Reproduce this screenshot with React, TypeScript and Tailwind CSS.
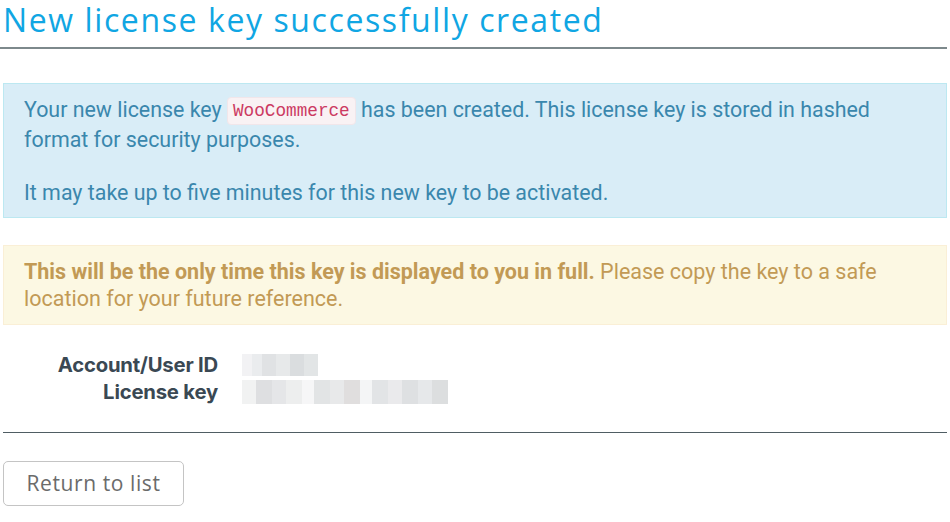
import React from "react";

export default function App() {
  const body = { fontFamily: "Roboto, 'Liberation Sans', sans-serif" };
  const head = { fontFamily: "'Open Sans', 'Liberation Sans', sans-serif" };
  return (
    <div className="w-[950px] h-[522px] bg-white overflow-hidden" style={body}>
      <div className="w-[947px] pl-[3px]">
        <h1
          className="-ml-[3px] pl-[3px] border-b-2 border-[#7d898c] h-[49px] text-[32px] leading-[40px] text-[#10a6e3] tracking-[1.6px] whitespace-nowrap"
          style={head}
        >
          New license key successfully created
        </h1>

        <div className="mt-[34px] h-[135px] bg-[#d9edf7] border border-[#bce8f1] text-[#3a87ad] text-[21.4px] leading-[30px] pl-[20px] pr-[20px] pt-[11px]">
          <p className="mb-[23px]">
            Your new license key{" "}
            <code
              className="inline-block align-[1px] leading-[20px] bg-[#f9f2f4] text-[#cc3a62] text-[17.7px] px-[5px] py-[3px] rounded-[4px] border border-[#f1e6ea]"
              style={{ fontFamily: "'Liberation Mono', monospace" }}
            >
              WooCommerce
            </code>{" "}
            has been created. This license key is stored in hashed format for security purposes.
          </p>
          <p>It may take up to five minutes for this new key to be activated.</p>
        </div>

        <div className="mt-[27px] h-[80px] bg-[#fcf8e3] border border-[#faefd6] text-[#c29a55] text-[21.5px] leading-[27px] pl-[20px] pr-[20px] pt-[12px]">
          <b className="font-bold">This will be the only time this key is displayed to you in full.</b>{" "}
          Please copy the key to a safe location for your future reference.
        </div>

        <div
          className="mt-[26px] grid grid-cols-[215px_1fr] gap-x-[24px] text-[20.3px] leading-[27px]"
          style={{ fontFamily: "Inter, 'Liberation Sans', sans-serif" }}
        >
          <div className="text-right font-bold text-[#3a4853] tracking-[-0.2px]">Account/User ID</div>
          <div className="flex items-center">
            <div className="flex h-[22px] w-[76px] opacity-80">
              <div className="w-[10px] bg-[#f0f0f2]" />
              <div className="w-[10px] bg-[#e6e8ea]" />
              <div className="w-[14px] bg-[#d9dcde]" />
              <div className="w-[14px] bg-[#e2e4e6]" />
              <div className="w-[14px] bg-[#d2d5d8]" />
              <div className="w-[14px] bg-[#dcdfe1]" />
            </div>
          </div>
          <div className="text-right font-bold text-[#3a4853] tracking-[-0.2px]">License key</div>
          <div className="flex items-center">
            <div className="flex h-[24px] w-[210px] opacity-80">
              <div className="w-[14px] bg-[#eeeff0]" />
              <div className="w-[16px] bg-[#d6d8da]" />
              <div className="w-[14px] bg-[#dfe1e3]" />
              <div className="w-[16px] bg-[#e9eaeb]" />
              <div className="w-[12px] bg-[#f5f5f6]" />
              <div className="w-[16px] bg-[#dcdedf]" />
              <div className="w-[14px] bg-[#e3e4e6]" />
              <div className="w-[16px] bg-[#d9d6d6]" />
              <div className="w-[12px] bg-[#f2f3f4]" />
              <div className="w-[16px] bg-[#dcdee0]" />
              <div className="w-[14px] bg-[#e5e6e8]" />
              <div className="w-[16px] bg-[#d7d9db]" />
              <div className="w-[14px] bg-[#e1e3e5]" />
              <div className="w-[16px] bg-[#d4d6d8]" />
            </div>
          </div>
        </div>

        <div className="mt-[27px] border-t border-[#4f5d63]" />

        <button
          className="mt-[28px] h-[45px] w-[181px] border border-[#c4c4c4] rounded-[5px] bg-white text-[#6b6b6b] text-[21px] tracking-[0.6px]"
          style={head}
        >
          Return to list
        </button>
      </div>
    </div>
  );
}
